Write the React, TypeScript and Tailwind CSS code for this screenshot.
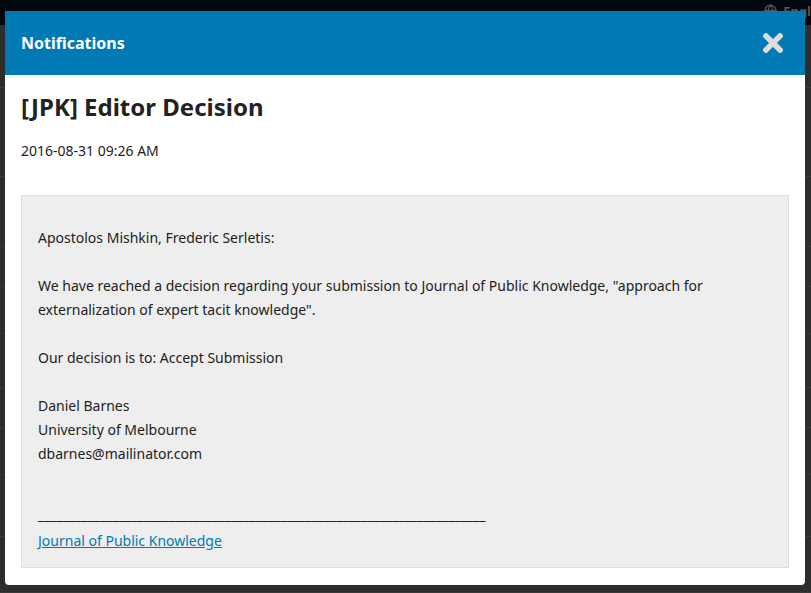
import { Globe } from 'lucide-react';

const bgRows = [63, 89, 70, 40, 47, 54, 40, 47, 62, 56];

function CloseIcon() {
  return (
    <svg width="20" height="20" viewBox="0 0 20 20" className="block">
      <path d="M3 3 L17 17 M17 3 L3 17" stroke="#dddddd" strokeWidth="5.5" strokeLinecap="square" />
    </svg>
  );
}

export default function App() {
  return (
    <div className="relative w-[811px] h-[593px] overflow-hidden bg-[#2d2d2d] font-['Noto_Sans',sans-serif]">
      {/* Dimmed page behind the modal */}
      <div className="flex flex-col">
        <div className="h-[25px] bg-[#01070e] flex items-start justify-end pt-[2px] gap-[6px]">
          <Globe className="w-[13px] h-[13px] mt-[2px] text-[#555]" strokeWidth={2.5} />
          <span className="text-[13px] font-bold leading-[18px] text-[#555] whitespace-nowrap">Engl</span>
        </div>
        {bgRows.map((h, i) => (
          <div key={i} className="border-b border-[#3a3a3a]" style={{ height: h }} />
        ))}
      </div>

      {/* Modal */}
      <div className="absolute left-[5px] top-[11px] w-[800px] h-[574px] bg-white rounded-b-[4px] flex flex-col">
        <div className="h-[64px] shrink-0 bg-[#0079b4] flex items-center justify-between pl-4 pr-[22px]">
          <h2 className="text-white font-bold text-[16px] leading-[20px]">Notifications</h2>
          <CloseIcon />
        </div>

        <div className="px-4 text-[#222]">
          <h1 className="mt-[17px] text-[24px] leading-[30px] font-bold">[JPK] Editor Decision</h1>
          <div className="mt-[19px] text-[14px] leading-[20px]">2016-08-31 09:26 AM</div>

          <div className="mt-[34px] border border-[#dddddd] bg-[#eeeeee] pt-[30px] px-4 pb-[14px] text-[14px] leading-6">
            <p>Apostolos Mishkin, Frederic Serletis:</p>
            <p className="mt-6">
              We have reached a decision regarding your submission to Journal of Public Knowledge, "approach for
              <br />
              externalization of expert tacit knowledge".
            </p>
            <p className="mt-6">Our decision is to: Accept Submission</p>
            <p className="mt-6">
              Daniel Barnes
              <br />
              University of Melbourne
              <br />
              dbarnes@mailinator.com
            </p>
            <p className="mt-[37px]">
              ________________________________________________________________________
            </p>
            <a href="#" className="block mt-[2px] text-[#007ab2] underline">
              Journal of Public Knowledge
            </a>
          </div>
        </div>
      </div>
    </div>
  );
}
